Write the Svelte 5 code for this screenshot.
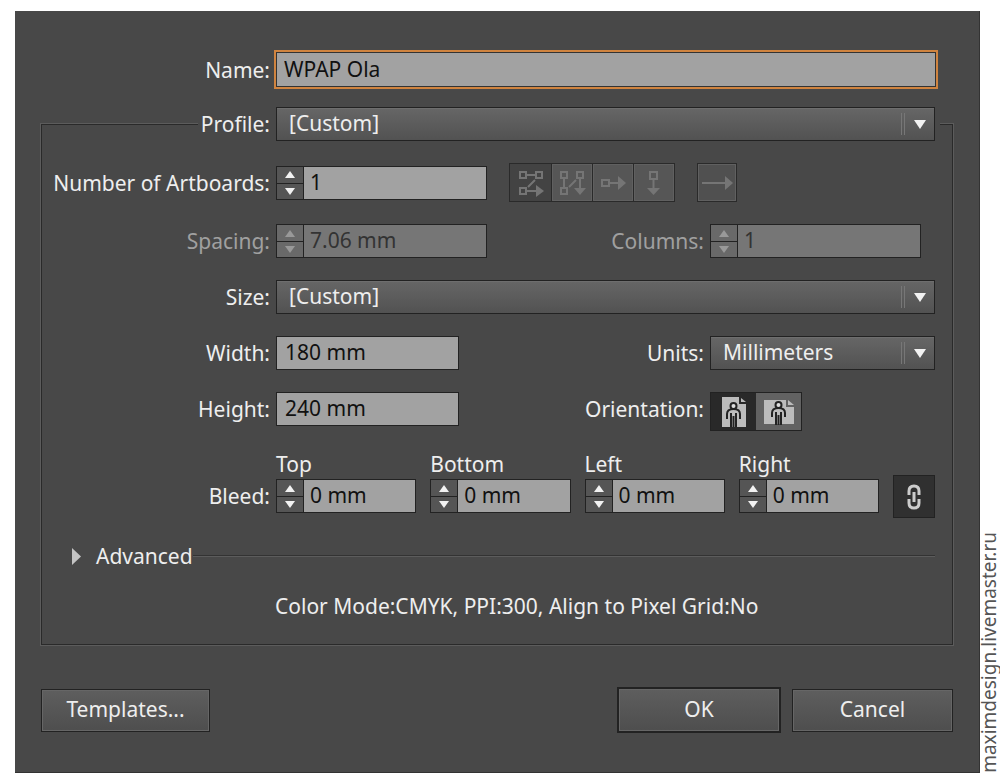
<script lang="ts">
	let name = $state('WPAP Ola');
	let profile = $state('[Custom]');
	let size = $state('[Custom]');
	let units = $state('Millimeters');
	let width = $state('180 mm');
	let height = $state('240 mm');
	let artboards = $state('1');
	let portrait = $state(true);
	let linked = $state(true);
	let bleed = $state([
		{ id: 'top', label: 'Top', value: '0 mm' },
		{ id: 'bottom', label: 'Bottom', value: '0 mm' },
		{ id: 'left', label: 'Left', value: '0 mm' },
		{ id: 'right', label: 'Right', value: '0 mm' }
	]);

	function step(value: string, by: number) {
		const unit = value.replace(/^[\d.]+/, '');
		return `${Math.max(0, parseFloat(value) + by)}${unit}`;
	}

	function stepBleed(index: number, by: number) {
		const next = step(bleed[index].value, by);
		for (const [i, side] of bleed.entries()) {
			if (linked || i === index) side.value = next;
		}
	}
</script>

{#snippet arrows(up: () => void, down: () => void, disabled: boolean)}
	<span class="arrows">
		<button type="button" aria-label="Increase" {disabled} onclick={up}>
			<svg width="10" height="7" viewBox="0 0 10 7"><path d="M5 0 10 7H0Z" /></svg>
		</button>
		<button type="button" aria-label="Decrease" {disabled} onclick={down}>
			<svg width="10" height="7" viewBox="0 0 10 7"><path d="M0 0H10L5 7Z" /></svg>
		</button>
	</span>
{/snippet}

{#snippet caret()}
	<span class="caret">
		<svg width="12" height="9" viewBox="0 0 12 9"><path d="M0 0H12L6 9Z" /></svg>
	</span>
{/snippet}

<div class="page">
	<form class="dialog" onsubmit={(e) => e.preventDefault()}>
		<div class="name-row">
			<label for="name">Name:</label>
			<input id="name" class="name" type="text" bind:value={name} />
		</div>

		<fieldset>
			<legend>
				<label for="profile">Profile:</label>
				<span class="dropdown">
					<select id="profile" bind:value={profile}><option>[Custom]</option></select>
					{@render caret()}
				</span>
			</legend>

			<div class="rows">
				<div class="row tall">
					<label for="artboards">Number of Artboards:</label>
					<div class="line">
						<span class="stepper wide">
							{@render arrows(
								() => (artboards = step(artboards, 1)),
								() => (artboards = step(artboards, -1)),
								false
							)}
							<input id="artboards" type="text" bind:value={artboards} />
						</span>
						<div class="layouts">
							<button type="button" class="pressed" disabled aria-label="Grid by row">
								<svg width="28" height="28" viewBox="0 0 28 28">
									<path d="M3 3h6v6H3ZM19 3h6v6h-6ZM3 19h6v6H3ZM9 6h10M18 11l-7 7M9 22h10" />
									<path class="solid" d="M19 16 27 22 19 28Z" />
								</svg>
							</button>
							<button type="button" disabled aria-label="Grid by column">
								<svg width="28" height="28" viewBox="0 0 28 28">
									<path d="M3 3h6v6H3ZM19 3h6v6h-6ZM3 19h6v6H3ZM6 9v10M11 18l7-7M22 9v10" />
									<path class="solid" d="M16 19H28L22 26Z" />
								</svg>
							</button>
							<button type="button" disabled aria-label="Arrange by row">
								<svg width="28" height="28" viewBox="0 0 28 28">
									<path d="M3 11h7v6H3ZM10 14h9" />
									<path class="solid" d="M19 7 27 14 19 21Z" />
								</svg>
							</button>
							<button type="button" disabled aria-label="Arrange by column">
								<svg width="28" height="28" viewBox="0 0 28 28">
									<path d="M10 3h7v7h-7ZM13.500 10v10" />
									<path class="solid" d="M7 19H20L13.500 26Z" />
								</svg>
							</button>
						</div>
						<div class="layouts single">
							<button type="button" disabled aria-label="Change to right-to-left layout">
								<svg width="34" height="28" viewBox="0 0 34 28">
									<path d="M2 14h24" />
									<path class="solid" d="M25 7 33 14 25 21Z" />
								</svg>
							</button>
						</div>
					</div>
				</div>

				<div class="row pair">
					<label class="off" for="spacing">Spacing:</label>
					<span class="stepper wide off">
						{@render arrows(() => {}, () => {}, true)}
						<input id="spacing" type="text" value="7.06 mm" disabled />
					</span>
					<label class="off" for="columns">Columns:</label>
					<span class="stepper wide off">
						{@render arrows(() => {}, () => {}, true)}
						<input id="columns" type="text" value="1" disabled />
					</span>
				</div>

				<div class="row">
					<label for="size">Size:</label>
					<span class="dropdown">
						<select id="size" bind:value={size}><option>[Custom]</option></select>
						{@render caret()}
					</span>
				</div>

				<div class="row pair">
					<label for="width">Width:</label>
					<input id="width" class="measure" type="text" bind:value={width} />
					<label for="units">Units:</label>
					<span class="dropdown">
						<select id="units" bind:value={units}><option>Millimeters</option></select>
						{@render caret()}
					</span>
				</div>

				<div class="row pair top">
					<label for="height">Height:</label>
					<input id="height" class="measure" type="text" bind:value={height} />
					<span class="caption" id="orientation">Orientation:</span>
					<div class="orientation" role="group" aria-labelledby="orientation">
						<button
							type="button"
							class={{ pressed: portrait }}
							aria-label="Portrait"
							onclick={() => (portrait = true)}
						>
							<svg width="26" height="32" viewBox="0 0 26 32">
								<path class="sheet" d="M1 1H18V8H25V31H1Z" />
								<path class="sheet" d="M20 2 25 6H20Z" />
								<path class="body" d="M6 23V18Q6 13 12.500 13Q19 13 19 18V23M10 17V31M15 17V31M12.500 20V31" />
								<circle class="head" cx="12.500" cy="10" r="3" />
							</svg>
						</button>
						<button
							type="button"
							class={{ pressed: !portrait }}
							aria-label="Landscape"
							onclick={() => (portrait = false)}
						>
							<svg width="32" height="28" viewBox="0 0 32 28">
								<path class="sheet" d="M1 2H23V9H31V26H1Z" />
								<path class="sheet" d="M25 2 31 7H25Z" />
								<path class="body" d="M9 19V15Q9 10 15.500 10Q22 10 22 15V19M13 14V27M18 14V27M15.500 17V27" />
								<circle class="head" cx="15.500" cy="7" r="3" />
							</svg>
						</button>
					</div>
				</div>

				<div class="row bleed">
					<span class="caption">Bleed:</span>
					<div class="sides">
						{#each bleed as side, i (side.id)}
							<div class="side">
								<label for={side.id}>{side.label}</label>
								<span class="stepper">
									{@render arrows(
										() => stepBleed(i, 1),
										() => stepBleed(i, -1),
										false
									)}
									<input id={side.id} type="text" bind:value={side.value} />
								</span>
							</div>
						{/each}
						<button
							type="button"
							class="link"
							aria-label="Make all settings the same"
							aria-pressed={linked}
							onclick={() => (linked = !linked)}
						>
							<svg width="16" height="28" viewBox="0 0 16 28">
								<path d="M3 12V8Q3 3 8 3Q13 3 13 8V12M3 16V20Q3 25 8 25Q13 25 13 20V16" />
								<path d="M8 9V19" />
							</svg>
						</button>
					</div>
				</div>

				<div class="advanced">
					<button type="button" aria-expanded="false">
						<svg width="9" height="17" viewBox="0 0 9 17"><path d="M0 0 9 8.500 0 17Z" /></svg>
						Advanced
					</button>
					<span class="rule"></span>
				</div>

				<p class="summary">Color Mode:CMYK, PPI:300, Align to Pixel Grid:No</p>
			</div>
		</fieldset>

		<footer>
			<button type="button" class="push templates">Templates...</button>
			<button type="submit" class="push ok">OK</button>
			<button type="button" class="push cancel">Cancel</button>
		</footer>
	</form>
	<span class="credit">maximdesign.livemaster.ru</span>
</div>

<style>
	:global(body) {
		margin: 0;
		background: #fff;
	}

	.page {
		display: flex;
		padding: 11px 2px 6px 15px;
		font-family: 'Noto Sans', 'Open Sans', sans-serif;
		font-size: 21px;
		line-height: 22px;
		color: #eee;
	}

	.page * {
		box-sizing: border-box;
	}

	button,
	input,
	select {
		margin: 0;
		padding: 0;
		border: 1px solid #222;
		border-radius: 0;
		font: inherit;
		color: inherit;
		outline: none;
	}

	svg {
		display: block;
		flex: none;
	}

	.dialog {
		flex: 1;
		min-width: 0;
		padding: 39px 26px 39px 26px;
		border: 1px solid #333;
		border-width: 0 1px 1px 0;
		background: #484848;
	}

	input {
		width: 100%;
		min-width: 0;
		height: 34px;
		padding: 0 8px 2px;
		background: #a2a2a2;
		color: #111;
	}

	/* Name */
	.name-row {
		display: grid;
		grid-template-columns: 229px 1fr;
		align-items: center;
		gap: 4px;
		margin: 0 15px 18px 0;
		text-align: right;
	}

	.name {
		height: 39px;
		border: 2px solid #d08440;
		box-shadow: inset 0 0 0 1px #333;
	}

	/* Frame, broken by the profile row */
	fieldset {
		min-width: 0;
		margin: 0;
		padding: 0;
		border: 1px solid #2a2a2a;
		box-shadow: 0 0 0 1px #5c5c5c;
	}

	legend {
		display: flex;
		align-items: center;
		gap: 6px;
		width: calc(100% - 168px);
		margin-left: 156px;
		padding: 0 5px 0 0;
		background: #484848;
	}

	legend label {
		width: 72px;
		text-align: right;
	}

	.rows {
		display: flex;
		flex-direction: column;
		gap: 22px;
		padding: 22px 17px 26px 0;
	}

	.row {
		display: grid;
		grid-template-columns: 228px 1fr;
		align-items: center;
		column-gap: 6px;
	}

	.row > label,
	.caption {
		text-align: right;
	}

	.pair {
		grid-template-columns: 228px 211px 1fr 225px;
	}

	.tall {
		min-height: 39px;
	}

	.top {
		align-items: start;
	}

	.top > label,
	.top > .caption {
		line-height: 34px;
	}

	.line {
		display: flex;
		align-items: center;
		gap: 22px;
	}

	label.off {
		color: #a0a0a0;
	}

	.measure {
		width: 183px;
	}

	/* Drop-downs */
	.dropdown {
		position: relative;
		display: flex;
		flex: 1;
	}

	select {
		flex: 1;
		width: 100%;
		height: 34px;
		padding: 0 36px 2px 12px;
		appearance: none;
		background: linear-gradient(#666, #525252);
		box-shadow: inset 0 1px #6e6e6e;
	}

	.caret {
		position: absolute;
		top: 6px;
		right: 1px;
		bottom: 6px;
		display: flex;
		align-items: center;
		justify-content: center;
		width: 33px;
		border-left: 4px double #777;
		pointer-events: none;
	}

	.caret svg,
	.arrows svg {
		fill: #f2f2f2;
	}

	/* Steppers */
	.stepper {
		display: flex;
	}

	.wide {
		width: 211px;
	}

	.stepper input {
		flex: 1;
		padding: 0 6px 2px;
		border-left: 0;
	}

	.arrows {
		display: grid;
		grid-template-rows: 1fr 1fr;
		flex: none;
		width: 28px;
		height: 34px;
		border: 1px solid #222;
	}

	.arrows button {
		display: flex;
		align-items: center;
		justify-content: center;
		border: 0;
		background: #555;
	}

	.arrows button + button {
		border-top: 1px solid #222;
	}

	.off input {
		background: #767676;
		color: #333;
	}

	.off .arrows button {
		background: #696969;
	}

	.off .arrows svg {
		fill: #999;
	}

	/* Artboard layout buttons */
	.layouts {
		display: flex;
		border: 1px solid #2a2a2a;
	}

	.layouts button {
		display: flex;
		align-items: center;
		justify-content: center;
		width: 41px;
		height: 37px;
		border: 0;
		background: #565656;
		box-shadow: inset 0 0 0 1px #606060;
	}

	.layouts button + button {
		border-left: 1px solid #2a2a2a;
	}

	.layouts .pressed {
		background: #434343;
		box-shadow: none;
	}

	.single button {
		width: 38px;
		background: #505050;
	}

	.layouts path {
		fill: none;
		stroke: #757575;
		stroke-width: 2;
	}

	.layouts .solid {
		fill: #757575;
		stroke: none;
	}

	/* Orientation */
	.orientation {
		display: flex;
		justify-self: start;
		border: 1px solid #222;
	}

	.orientation button {
		display: flex;
		align-items: center;
		justify-content: center;
		width: 45px;
		height: 37px;
		border: 0;
		background: #626262;
	}

	.orientation .pressed {
		background: #292929;
	}

	.sheet {
		fill: #bcbcbc;
	}

	.body {
		fill: none;
		stroke: #222;
		stroke-width: 2;
	}

	.head {
		fill: #ddd;
		stroke: #222;
		stroke-width: 2;
	}

	/* Bleed */
	.bleed {
		align-items: end;
	}

	.bleed > .caption {
		line-height: 43px;
	}

	.sides {
		display: grid;
		grid-template-columns: repeat(4, 1fr) 42px;
		align-items: end;
		column-gap: 14px;
	}

	.side {
		display: grid;
		gap: 4px;
		padding-bottom: 5px;
	}

	.link {
		display: flex;
		align-items: center;
		justify-content: center;
		height: 43px;
		background: #303030;
	}

	.link path {
		fill: none;
		stroke: #ccc;
		stroke-width: 3;
	}

	/* Advanced */
	.advanced {
		display: flex;
		align-items: center;
		height: 32px;
		padding-left: 30px;
	}

	.advanced button {
		display: flex;
		align-items: center;
		gap: 15px;
		border: 0;
		background: none;
	}

	.advanced svg {
		fill: #c4c4c4;
	}

	.rule {
		flex: 1;
		height: 2px;
		border-top: 1px solid #333;
		border-bottom: 1px solid #5c5c5c;
	}

	.summary {
		margin: 0;
		padding-left: 233px;
		line-height: 24px;
	}

	/* Footer buttons */
	footer {
		display: flex;
		align-items: center;
		gap: 11px;
		margin-top: 42px;
	}

	.push {
		height: 43px;
		padding-bottom: 2px;
		background: linear-gradient(#5e5e5e, #4e4e4e);
		box-shadow: inset 0 0 0 1px #666;
	}

	.templates {
		width: 169px;
		margin-right: auto;
	}

	.ok {
		width: 164px;
		height: 46px;
		border-width: 2px;
	}

	.cancel {
		width: 161px;
	}

	.credit {
		align-self: end;
		width: 18px;
		font-size: 19px;
		line-height: 18px;
		color: #555;
		white-space: nowrap;
		writing-mode: vertical-rl;
		transform: rotate(180deg);
	}
</style>
